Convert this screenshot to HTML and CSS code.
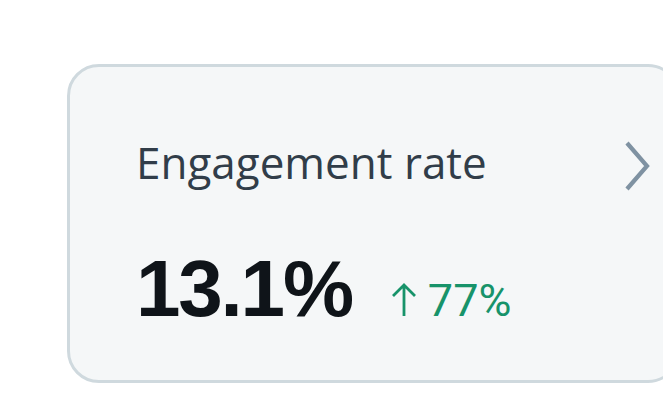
FILE: index.html
```html
<!DOCTYPE html>
<html lang="en">

<head>
    <meta charset="UTF-8">
    <meta name="viewport" content="width=device-width, initial-scale=1.0">
    <title>Engagement rate</title>
    <link rel="stylesheet" href="styles.css">
</head>

<body>
    <div class="page">
        <div class="stat-card">
            <div class="stat-head">
                <p class="stat-label">Engagement rate</p>
                <svg class="chevron" width="26" height="52" viewBox="0 0 26 52">
                    <path d="M3 3 L23 26 L3 49" fill="none" stroke="currentColor" stroke-width="4.2" />
                </svg>
            </div>
            <div class="stat-row">
                <span class="stat-value">13.1%</span>
                <span class="stat-delta">
                    <svg class="arrow" width="26" height="33" viewBox="0 0 26 33">
                        <path d="M13 2 V33 M2 13 L13 2 L24 13" fill="none" stroke="currentColor" stroke-width="2.8" />
                    </svg>
                    77%
                </span>
            </div>
        </div>
    </div>
</body>

</html>
```

FILE: styles.css
```css
body {
    margin: 0;
    background: #fff;
    font-family: "Liberation Sans", Arial, sans-serif;
}

.page {
    padding: 64px 0 0 67px;
}

.stat-card {
    box-sizing: border-box;
    width: 613px;
    height: 319px;
    background: #f5f7f8;
    border: 3px solid #cfd9de;
    border-radius: 32px;
    padding: 73px 27px 0 66px;
}

.stat-head {
    display: flex;
    justify-content: space-between;
    align-items: flex-start;
}

.stat-label {
    margin: 0;
    font-family: "Open Sans", sans-serif;
    font-size: 44px;
    line-height: 1;
    color: #313d49;
}

.chevron {
    color: #7f92a2;
}

.stat-row {
    display: flex;
    align-items: baseline;
    gap: 39px;
    margin-top: 57px;
}

.stat-value {
    font-size: 80px;
    font-weight: bold;
    letter-spacing: -2.2px;
    line-height: 1;
    color: #0f1419;
}

.stat-delta {
    display: flex;
    align-items: baseline;
    gap: 11px;
    font-family: Roboto, "Liberation Sans", sans-serif;
    font-size: 45px;
    line-height: 1;
    color: #17936a;
}
```
